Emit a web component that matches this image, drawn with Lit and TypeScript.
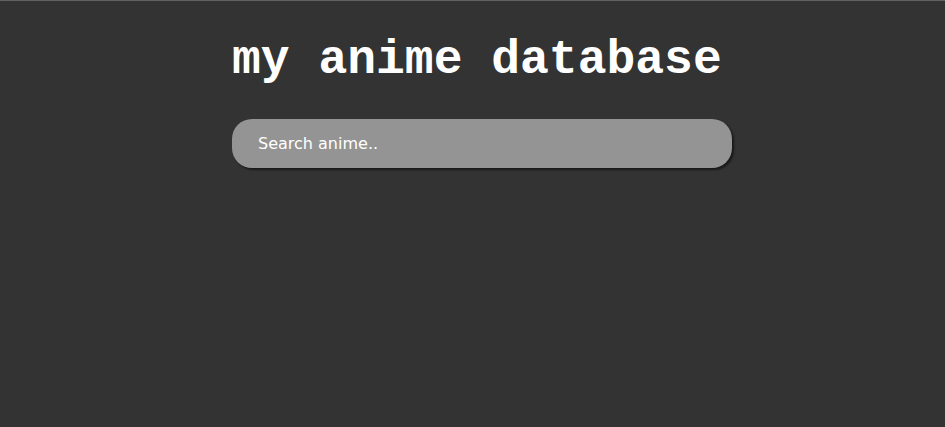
import { LitElement, html, css } from "lit";
import { customElement } from "lit/decorators.js";

@customElement("app-root")
export class AppRoot extends LitElement {
  static styles = css`
    :host {
      display: block;
      min-height: 100vh;
      box-sizing: border-box;
      background: #333333;
      border-top: 1px solid #5f6063;
      color: #ffffff;
    }
    .page {
      display: flex;
      flex-direction: column;
      align-items: flex-start;
      gap: 32px;
      width: fit-content;
      max-width: 100%;
      margin: 0 auto;
      padding: 32px 0 0 19px;
      box-sizing: border-box;
    }
    .title {
      margin: 0;
      font: bold 48px/54px "Courier New", "Liberation Mono", monospace;
    }
    .search {
      width: 500px;
      max-width: 100%;
      height: 49px;
      box-sizing: border-box;
      padding: 0 26px;
      border: 0;
      border-radius: 20px;
      background: #949494;
      box-shadow: 2px 2px 2px #1a1a1a;
      color: #ffffff;
      font: 16px "DejaVu Sans", Verdana, sans-serif;
      outline: none;
    }
    .search::placeholder {
      color: #ffffff;
      opacity: 1;
    }
  `;

  render() {
    return html`
      <main class="page">
        <h1 class="title">my anime database</h1>
        <input class="search" type="text" placeholder="Search anime.." aria-label="Search anime" />
      </main>
    `;
  }
}
